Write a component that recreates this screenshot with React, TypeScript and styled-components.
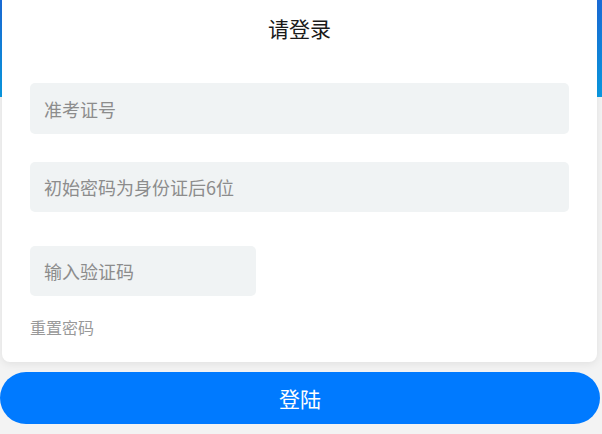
import React from "react";
import styled, { createGlobalStyle } from "styled-components";

const GlobalStyle = createGlobalStyle`
  html, body {
    margin: 0;
    padding: 0;
  }
  body {
    min-height: 434px;
    background: linear-gradient(to bottom, #1a6cd8 0px, #0a9ae2 97px, #f3f3f3 97px, #f3f3f3 100%);
    font-family: "Noto Sans CJK SC", "Noto Sans", sans-serif;
  }
  input::placeholder {
    color: #8c8c8c;
    opacity: 1;
  }
`;

const Page = styled.div`
  display: flex;
  flex-direction: column;
  padding: 0 2px 10px 0;
`;

const Card = styled.div`
  margin-left: 2px;
  margin-right: 3px;
  background: #ffffff;
  border-radius: 0 0 8px 8px;
  box-shadow: 0 2px 8px rgba(0, 0, 0, 0.08);
  padding: 14px 28px 24px 28px;
  display: flex;
  flex-direction: column;
`;

const Title = styled.h1`
  margin: 0 0 41px 0;
  font-size: 21px;
  font-weight: 400;
  line-height: 28px;
  color: #1a1a1a;
  text-align: center;
`;

const Field = styled.input<{ $width?: string; $height: number; $gap: number }>`
  box-sizing: border-box;
  width: ${(p) => p.$width ?? "100%"};
  height: ${(p) => p.$height}px;
  margin-bottom: ${(p) => p.$gap}px;
  padding: 0 14px;
  border: none;
  outline: none;
  border-radius: 5px;
  background: #f0f3f4;
  font-family: "Noto Sans CJK SC", "Noto Sans", sans-serif;
  font-size: 18px;
  color: #333;
`;

const ResetLink = styled.a`
  margin-top: 20px;
  font-size: 16px;
  line-height: 22px;
  color: #999999;
  text-decoration: none;
  align-self: flex-start;
`;

const LoginButton = styled.button`
  margin-top: 10px;
  height: 52px;
  border: none;
  border-radius: 26px;
  background: #007aff;
  color: #ffffff;
  font-family: "Noto Sans CJK SC", "Noto Sans", sans-serif;
  font-size: 21px;
  cursor: pointer;
`;

export default function App() {
  return (
    <>
      <GlobalStyle />
      <Page>
        <Card>
          <Title>请登录</Title>
          <Field placeholder="准考证号" $height={51} $gap={28} />
          <Field placeholder="初始密码为身份证后6位" $height={50} $gap={34} />
          <Field placeholder="输入验证码" $width="226px" $height={50} $gap={0} />
          <ResetLink href="#">重置密码</ResetLink>
        </Card>
        <LoginButton>登陆</LoginButton>
      </Page>
    </>
  );
}
